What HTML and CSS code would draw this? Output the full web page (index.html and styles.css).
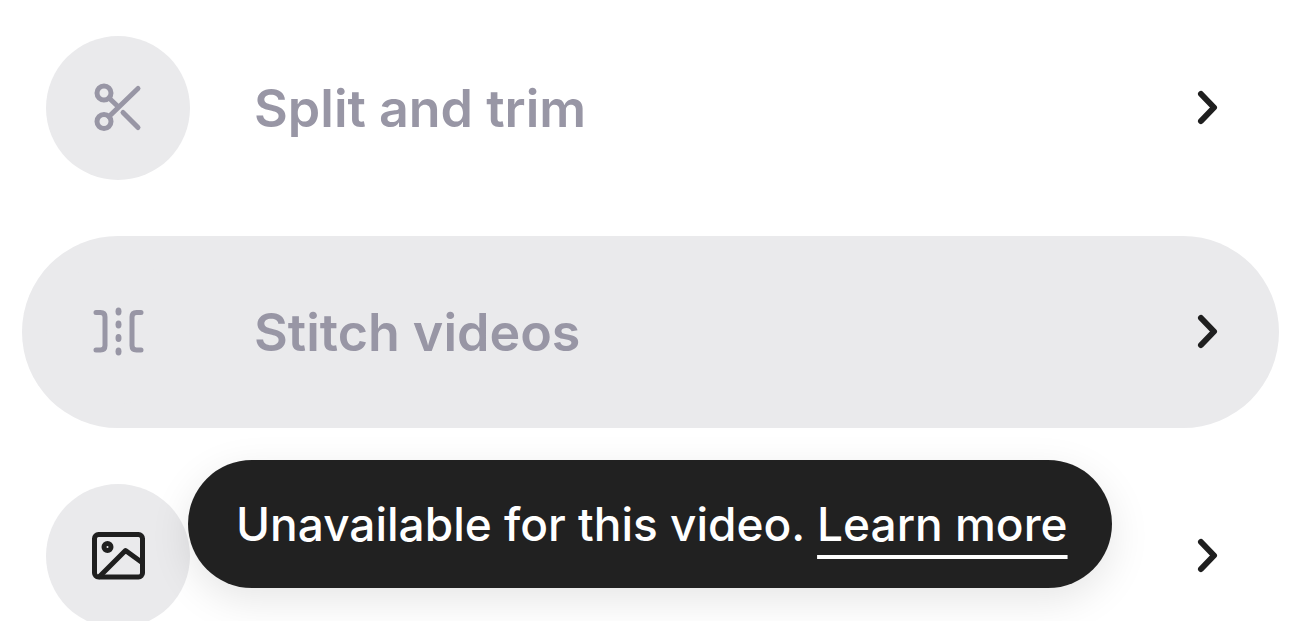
FILE: index.html
```
<!DOCTYPE html>
<html lang="en">
<head>
    <meta charset="UTF-8">
    <meta name="viewport" content="width=device-width, initial-scale=1.0">
    <title>Video tools</title>
    <link rel="stylesheet" href="styles.css">
</head>
<body>
    <main class="panel">
        <ul class="tools">
            <li class="tool">
                <button class="tool-btn unavailable" type="button" aria-disabled="true">
                    <span class="tool-icon">
                        <svg viewBox="0 0 64 64" aria-hidden="true">
                            <circle cx="18" cy="17" r="7"/>
                            <circle cx="18" cy="45.500" r="7"/>
                            <path d="M23 40.500L52 12.500M23 22l9 8.500M37 36.500l15 15"/>
                        </svg>
                    </span>
                    <span class="tool-label">Split and trim</span>
                    <svg class="chevron" viewBox="0 0 48 48" aria-hidden="true"><path d="M18 10l13 13.500-13 13.500"/></svg>
                </button>
            </li>
            <li class="tool">
                <button class="tool-btn unavailable active" type="button" aria-disabled="true" aria-describedby="tip">
                    <span class="tool-icon">
                        <svg viewBox="0 0 64 64" aria-hidden="true">
                            <path d="M10 12.500h4.500q4.500 0 4.500 4.500v28.500q0 4.500-4.500 4.500H10M55 12.500h-4.500Q46 12.500 46 17v28.500q0 4.500 4.500 4.500H55"/>
                            <g class="dots">
                                <ellipse cx="32.500" cy="11.500" rx="3" ry="4"/>
                                <ellipse cx="32.500" cy="24.500" rx="3" ry="4"/>
                                <ellipse cx="32.500" cy="38" rx="3" ry="4"/>
                                <ellipse cx="32.500" cy="51.500" rx="3" ry="4"/>
                            </g>
                        </svg>
                    </span>
                    <span class="tool-label">Stitch videos</span>
                    <svg class="chevron" viewBox="0 0 48 48" aria-hidden="true"><path d="M18 10l13 13.500-13 13.500"/></svg>
                </button>
                <div class="tooltip" id="tip" role="tooltip">Unavailable for this video. <a href="#">Learn more</a></div>
            </li>
            <li class="tool">
                <button class="tool-btn" type="button" aria-label="Thumbnail">
                    <span class="tool-icon">
                        <svg viewBox="0 0 64 64" aria-hidden="true">
                            <rect x="8.500" y="10.500" width="48" height="42.500" rx="4"/>
                            <circle cx="21.500" cy="23" r="3.500"/>
                            <path d="M13.500 52.500l26-26 16.500 12"/>
                        </svg>
                    </span>
                    <span class="tool-label"></span>
                    <svg class="chevron" viewBox="0 0 48 48" aria-hidden="true"><path d="M18 10l13 13.500-13 13.500"/></svg>
                </button>
            </li>
        </ul>
    </main>
</body>
</html>
```
FILE: styles.css
```
* {
    box-sizing: border-box;
}
body {
    margin: 0;
    padding-bottom: 23px;
    height: 100vh;
    background: #fff;
    color: #212121;
    font-family: Inter, "Liberation Sans", sans-serif;
    font-weight: 500;
}
.panel {
    height: 100%;
    overflow: hidden;
    padding: 12px 29px 0 22px;
}
.tools {
    display: flex;
    flex-direction: column;
    gap: 32px;
    margin: 0;
    padding: 0;
    list-style: none;
}
.tool {
    position: relative;
}
.tool-btn {
    display: flex;
    align-items: center;
    gap: 64px;
    width: 100%;
    padding: 24px 48px 24px 24px;
    border: none;
    border-radius: 96px;
    background: none;
    color: #1f1f1f;
    font: inherit;
    font-size: 52px;
    font-weight: 600;
    text-align: left;
    cursor: pointer;
}
.tool-btn.active {
    background: #eaeaec;
}
.unavailable .tool-icon,
.unavailable .tool-label {
    color: #9896a5;
}
.tool-icon {
    display: flex;
    align-items: center;
    justify-content: center;
    width: 144px;
    height: 144px;
    border-radius: 50%;
    background: #eaeaec;
}
.tool-icon svg {
    width: 64px;
    height: 64px;
}
.tool-label {
    flex: 1;
}
.tool svg {
    fill: none;
    stroke: currentColor;
    stroke-width: 5;
    stroke-linecap: round;
    stroke-linejoin: round;
}
.tool .dots {
    fill: currentColor;
    stroke: none;
}
.tool .chevron {
    width: 48px;
    height: 48px;
    stroke-width: 6;
}

/* Tooltip under the active row */
.tooltip {
    position: absolute;
    z-index: 1;
    top: 100%;
    left: 166px;
    margin-top: 32px;
    padding: 32px 44px 32px 48px;
    border-radius: 64px;
    background: #212121;
    box-shadow: 0 12px 40px rgba(0, 0, 0, 0.1);
    color: #fff;
    font-size: 46px;
    line-height: 64px;
    white-space: nowrap;
}
.tooltip a {
    color: inherit;
    text-decoration: underline;
    text-decoration-thickness: 4px;
    text-underline-offset: 14px;
    text-decoration-skip-ink: none;
}
```
